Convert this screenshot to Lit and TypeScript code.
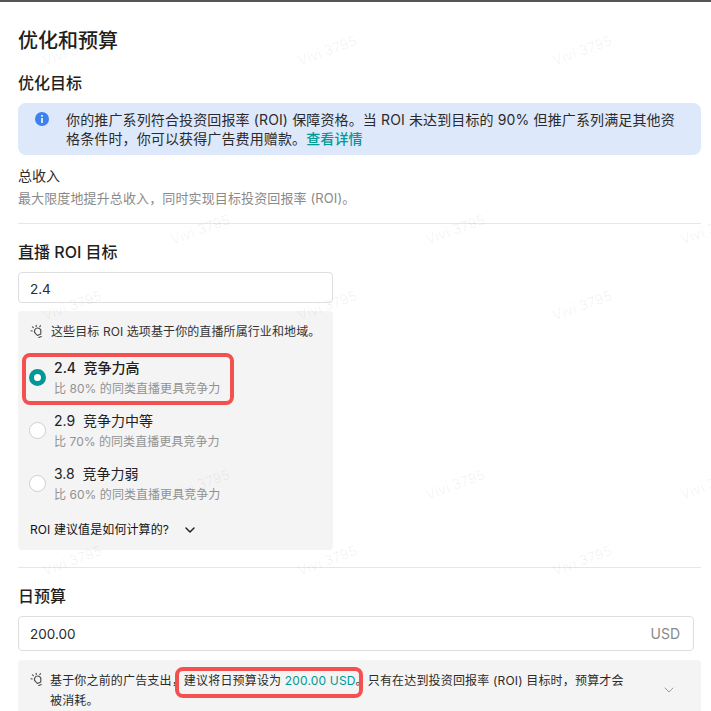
import { LitElement, html, css, svg } from "lit";
import { customElement } from "lit/decorators.js";

const bulb = svg`<svg class="bulb" viewBox="0 0 16 16" width="16" height="16" fill="none" stroke="#4a4a4a" stroke-width="1.1" stroke-linecap="round" stroke-linejoin="round">
  <g transform="rotate(-22 8 8)">
    <path d="M5.3 8.9a3.2 3.2 0 1 1 5.4 0c-.5.8-.8 1.3-.8 2.1H6.1c0-.8-.3-1.3-.8-2.1Z"/>
    <path d="M6.6 13.4h2.8"/>
  </g>
  <path d="M6.2 1.2v1.3M2.4 2.8l1 .9M1 6.8l1.3.2M10.4 1.6l-.6 1.1"/>
</svg>`;

const marks: [number, number][] = [
  [72, 50], [327, 50], [582, 50],
  [200, 229], [455, 229], [710, 229],
  [72, 305], [327, 305], [582, 305],
  [200, 484], [455, 484], [710, 484],
  [72, 560], [327, 560], [582, 560],
];

@customElement("app-root")
export class AppRoot extends LitElement {
  static styles = css`
    :host {
      display: block;
      width: 711px;
      height: 711px;
      overflow: hidden;
      position: relative;
      background: #fff;
      color: #222;
      font-family: "Inter", "Noto Sans CJK SC", "Noto Sans", sans-serif;
      font-size: 13px;
    }
    .page {
      box-sizing: border-box;
      height: 711px;
      border-top: 2px solid #555;
      padding: 0 10px 0 18px;
      display: flex;
      flex-direction: column;
    }
    h1 {
      margin: 25px 0 0;
      font-size: 20px;
      line-height: 28px;
      font-weight: 500;
      color: #1f1f1f;
    }
    h2 {
      margin: 0;
      font-size: 16px;
      line-height: 22px;
      font-weight: 500;
      color: #1f1f1f;
    }
    .goal { margin-top: 17px; }
    .banner {
      margin-top: 9px;
      height: 53px;
      box-sizing: border-box;
      background: #dee8fb;
      border-radius: 8px;
      padding: 7px 25px 0 17px;
      display: flex;
      gap: 17px;
      font-size: 14px;
      line-height: 19px;
      letter-spacing: 0.13px;
      color: #2b2b2b;
    }
    .banner svg { flex: none; margin-top: 2px; }
    .link { color: #009995; font-weight: 500; }
    .rev { margin-top: 11px; font-size: 14px; line-height: 20px; color: #2b2b2b; }
    .muted { color: #8a8a8a; font-size: 13px; line-height: 20px; margin-top: 2px; letter-spacing: 0.12px; }
    hr { border: 0; border-top: 1px solid #e6e6e6; margin: 0; width: 100%; }
    .d1 { margin-top: 15px; }
    .roi { margin-top: 17px; }
    .input {
      box-sizing: border-box;
      border: 1px solid #dedede;
      border-radius: 4px;
      background: #fff;
      display: flex;
      align-items: center;
      justify-content: space-between;
      font-size: 13.5px;
      color: #2b2b2b;
      padding: 3px 13px 0 11px;
    }
    .i1 { width: 315px; height: 31px; margin-top: 9px; }
    .panel {
      box-sizing: border-box;
      width: 315px;
      height: 241px;
      margin-top: 8px;
      background: #f4f4f4;
      border-radius: 4px;
      padding: 11px 12px;
      display: flex;
      flex-direction: column;
    }
    .tip {
      display: flex;
      align-items: center;
      gap: 5px;
      font-size: 12px;
      line-height: 20px;
      letter-spacing: 0.1px;
      color: #333;
      white-space: nowrap;
    }
    .tip .bulb { flex: none; }
    .opts { margin-top: 16px; display: flex; flex-direction: column; gap: 13px; }
    .opt { display: flex; align-items: center; gap: 8px; height: 40px; }
    .opt-text { padding-top: 2px; }
    .radio {
      flex: none;
      width: 17px;
      height: 17px;
      margin-left: -1px;
      box-sizing: border-box;
      border-radius: 50%;
      border: 1px solid #cfcfcf;
      background: #fff;
    }
    .radio.on { border: 5px solid #009995; }
    .t { font-size: 14px; line-height: 20px; color: #222; white-space: pre; }
    .t.on { font-weight: 500; }
    .s { font-size: 12px; line-height: 21px; color: #929292; letter-spacing: 0.05px; }
    .how {
      margin-top: 17px;
      display: flex;
      align-items: center;
      gap: 15px;
      font-size: 12px;
      line-height: 18px;
      letter-spacing: 0.1px;
      font-weight: 400;
      color: #111;
    }
    .d2 { margin-top: 17px; }
    .day { margin-top: 17px; }
    .i2 { width: 676px; height: 36px; margin-top: 9px; padding-top: 1px; }
    .usd { color: #8a8a8a; font-size: 14px; }
    .tip2 {
      box-sizing: border-box;
      margin-top: 9px;
      flex: 1;
      background: #f4f4f4;
      border-radius: 4px 4px 0 0;
      padding: 11px 28px 0 12px;
      display: flex;
      gap: 4px;
      font-size: 12px;
      line-height: 20px;
      letter-spacing: 0.17px;
      color: #2b2b2b;
      position: relative;
    }
    .tip2 .body { width: 582px; }
    .tip2 .bulb { flex: none; margin-top: 1px; }
    .chev { position: absolute; right: 26px; top: 24px; }
    .hl {
      position: absolute;
      border: 4px solid #f55050;
      border-radius: 8px;
      box-sizing: border-box;
      pointer-events: none;
    }
    .h1 { left: 22px; top: 353px; width: 212px; height: 52px; }
    .h2 { left: 175px; top: 667px; width: 188px; height: 31px; }
    .wm {
      position: absolute;
      transform: translate(-50%, -50%) rotate(-20deg);
      font-size: 14px;
      color: rgba(0, 0, 0, 0.06);
      white-space: nowrap;
      pointer-events: none;
    }
  `;

  private option(val: string, label: string, pct: string, on = false) {
    return html`<div class="opt">
      <span class="radio ${on ? "on" : ""}"></span>
      <div class="opt-text">
        <div class="t ${on ? "on" : ""}">${val}  ${label}</div>
        <div class="s">比 ${pct}% 的同类直播更具竞争力</div>
      </div>
    </div>`;
  }

  render() {
    return html`
      <div class="page">
        <h1>优化和预算</h1>
        <h2 class="goal">优化目标</h2>
        <div class="banner">
          <svg width="14" height="14" viewBox="0 0 14 14">
            <circle cx="7" cy="7" r="7" fill="#3b82f0"></circle>
            <rect x="6.2" y="6" width="1.6" height="5" fill="#fff"></rect>
            <rect x="6.2" y="3" width="1.6" height="1.7" fill="#fff"></rect>
          </svg>
          <div>你的推广系列符合投资回报率 (ROI) 保障资格。当 ROI 未达到目标的 90% 但推广系列满足其他资格条件时，你可以获得广告费用赠款。<span class="link">查看详情</span></div>
        </div>
        <div class="rev">总收入</div>
        <div class="muted">最大限度地提升总收入，同时实现目标投资回报率 (ROI)。</div>
        <hr class="d1" />
        <h2 class="roi">直播 ROI 目标</h2>
        <div class="input i1">2.4</div>
        <div class="panel">
          <div class="tip">${bulb}<span>这些目标 ROI 选项基于你的直播所属行业和地域。</span></div>
          <div class="opts">
            ${this.option("2.4", "竞争力高", "80", true)}
            ${this.option("2.9", "竞争力中等", "70")}
            ${this.option("3.8", "竞争力弱", "60")}
          </div>
          <div class="how">
            <span>ROI 建议值是如何计算的?</span>
            <svg width="12" height="12" viewBox="0 0 12 12" fill="none" stroke="#222" stroke-width="1.5" stroke-linecap="round" stroke-linejoin="round"><path d="M2 4l4 4 4-4"></path></svg>
          </div>
        </div>
        <hr class="d2" />
        <h2 class="day">日预算</h2>
        <div class="input i2"><span>200.00</span><span class="usd">USD</span></div>
        <div class="tip2">
          ${bulb}
          <div class="body">基于你之前的广告支出，建议将日预算设为 <span class="link" style="font-weight:400">200.00 USD</span>。只有在达到投资回报率 (ROI) 目标时，预算才会被消耗。</div>
          <svg class="chev" width="12" height="12" viewBox="0 0 12 12" fill="none" stroke="#999" stroke-width="1" stroke-linecap="round" stroke-linejoin="round"><path d="M2 4l4 4 4-4"></path></svg>
        </div>
      </div>
      <div class="hl h1"></div>
      <div class="hl h2"></div>
      ${marks.map(([x, y]) => html`<span class="wm" style="left:${x}px;top:${y}px">Vivi 3795</span>`)}
    `;
  }
}
